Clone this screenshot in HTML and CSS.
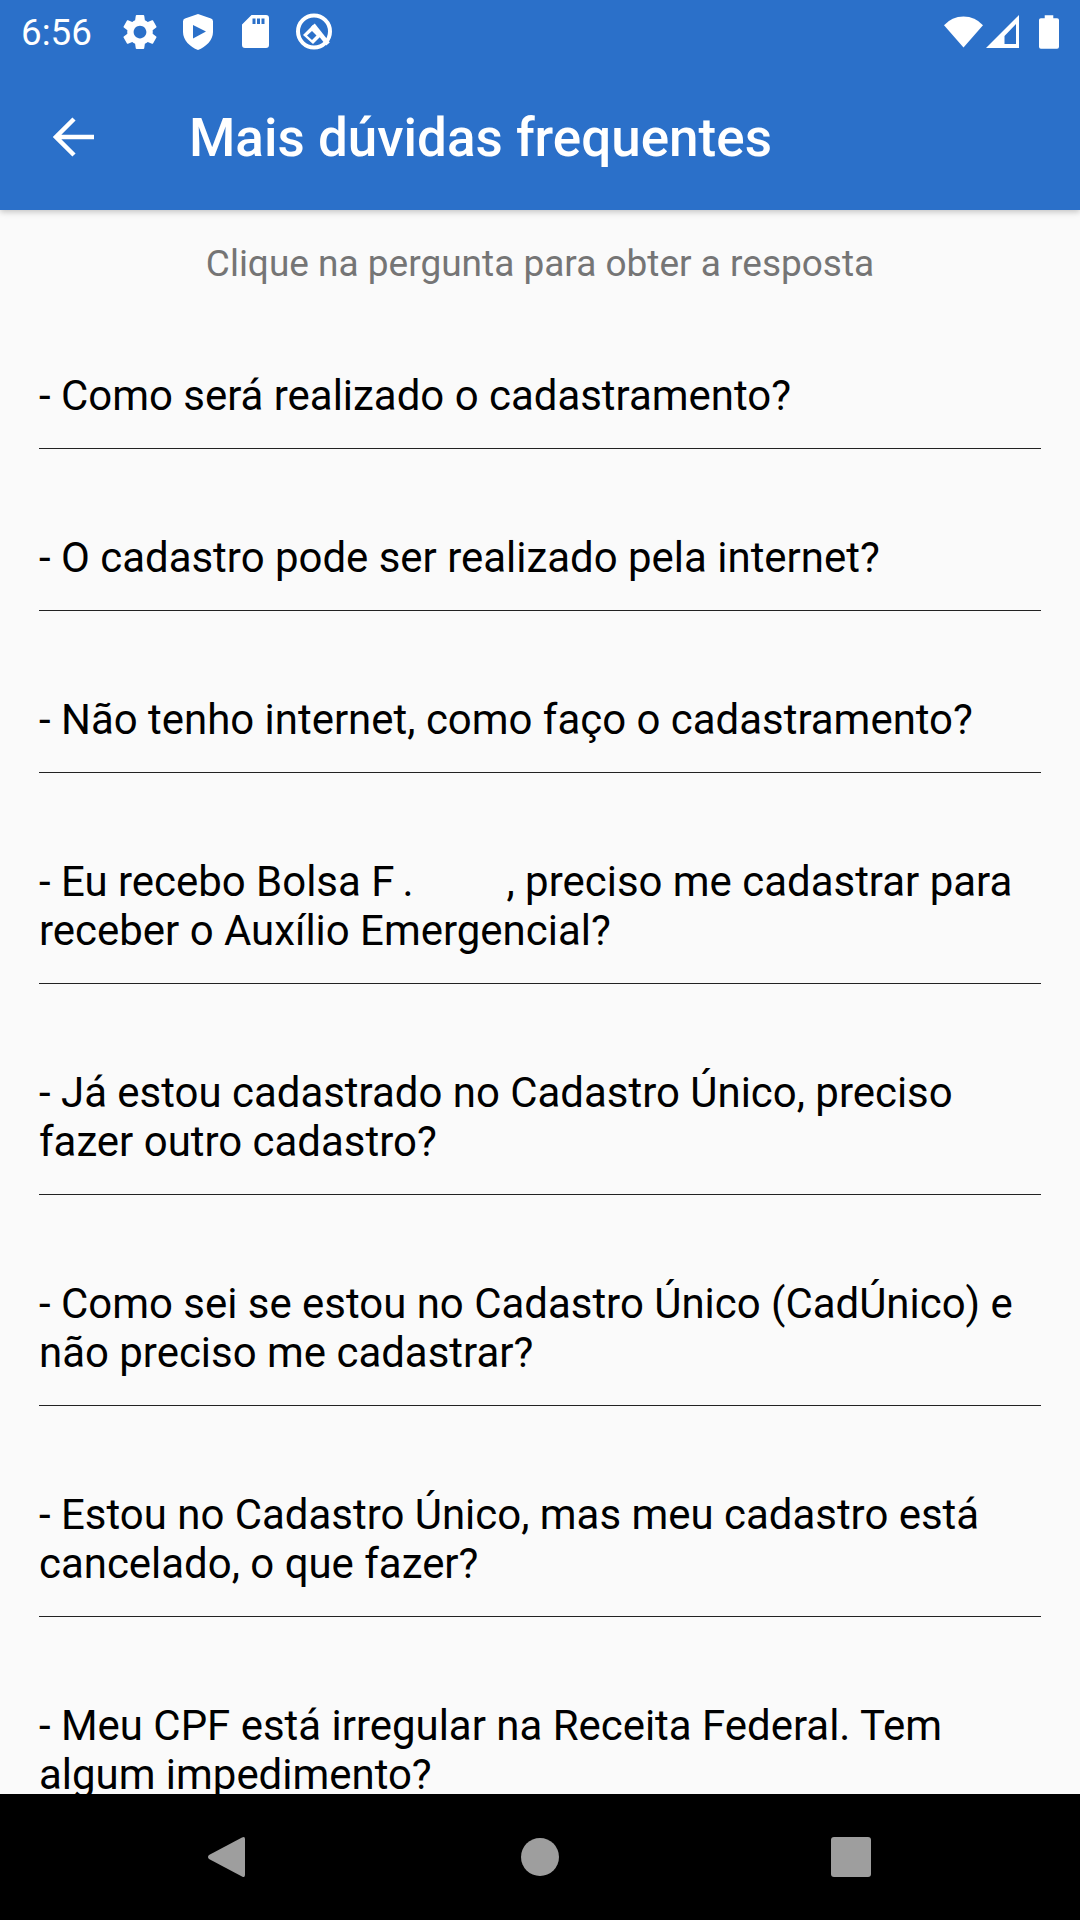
FILE: index.html
```html
<!DOCTYPE html>
<html>
  <head>
    <meta charset="UTF-8">
    <meta name="viewport" content="width=device-width, initial-scale=1.0">
    <title>Mais dúvidas frequentes</title>
    <link rel="stylesheet" href="styles.css">
  </head>
  <body>
    <div id="appContainer" class="flex-column">
      <header>
        <div id="statusBar" class="flex">
          <span class="status-time">6:56</span>
          <svg class="icon-gear" viewBox="2.4 2.4 19.2 19.2"><path d="M19.14,12.94c0.04-0.3,0.06-0.61,0.06-0.94c0-0.32-0.02-0.64-0.07-0.94l2.03-1.58c0.18-0.14,0.23-0.41,0.12-0.61 l-1.92-3.32c-0.12-0.22-0.37-0.29-0.59-0.22l-2.39,0.96c-0.5-0.38-1.03-0.7-1.62-0.94L14.4,2.81c-0.04-0.24-0.24-0.41-0.48-0.41 h-3.84c-0.24,0-0.43,0.17-0.47,0.41L9.25,5.35C8.66,5.59,8.12,5.92,7.63,6.29L5.24,5.33c-0.22-0.08-0.47,0-0.59,0.22L2.74,8.87 C2.62,9.08,2.66,9.34,2.86,9.48l2.03,1.58C4.84,11.36,4.8,11.69,4.8,12s0.02,0.64,0.07,0.94l-2.03,1.58 c-0.18,0.14-0.23,0.41-0.12,0.61l1.92,3.32c0.12,0.22,0.37,0.29,0.59,0.22l2.39-0.96c0.5,0.38,1.03,0.7,1.62,0.94l0.36,2.54 c0.05,0.24,0.24,0.41,0.48,0.41h3.84c0.24,0,0.44-0.17,0.47-0.41l0.36-2.54c0.59-0.24,1.13-0.56,1.62-0.94l2.39,0.96 c0.22,0.08,0.47,0,0.59-0.22l1.92-3.32c0.12-0.22,0.07-0.47-0.12-0.61L19.14,12.94z M12,15.6c-1.98,0-3.6-1.62-3.6-3.6 s1.62-3.6,3.6-3.6s3.6,1.62,3.6,3.6S13.98,15.6,12,15.6z"/></svg>
          <svg class="icon-shield" viewBox="0 0 30 36"><path fill-rule="evenodd" d="M15 0L28 4.5Q30 5.2 30 7.5V18C30 26 23 33 15 36C7 33 0 26 0 18V7.5Q0 5.2 2 4.5ZM10 11V24.5L23 17.5Z"/></svg>
          <svg class="icon-sd" viewBox="0 0 27 33"><path fill-rule="evenodd" d="M9.5 0H24Q27 0 27 3V30Q27 33 24 33H3Q0 33 0 30V9.5ZM10.5 3.5V9H13.5V3.5ZM15 3.5V9H18V3.5ZM19.5 3.5V9H22.5V3.5Z"/></svg>
          <svg class="icon-q" viewBox="0 0 38 38"><circle cx="19" cy="18.500" r="16" fill="none" stroke="#fff" stroke-width="4"/><path d="M18 12L33 31" fill="none" stroke="#fff" stroke-width="4.5"/><path d="M18 12L8 22L18 31L27 22Z" fill="#fff"/><path d="M17 18L12 22.500L17 27L21.500 22.500Z" fill="#2b70c9"/></svg>
          <div class="flex-grow-1"></div>
          <svg class="icon-wifi" viewBox="0 0 40 32"><path d="M20 32L0 9Q8 0 20 0T40 9Z"/></svg>
          <svg class="icon-signal" viewBox="0 0 33 33"><path fill-rule="evenodd" d="M33 0V33H0ZM30 9L18.500 21V29H30Z"/></svg>
          <svg class="icon-battery" viewBox="0 0 21 35"><path d="M6 0H15V3H19Q21 3 21 5V33Q21 35 19 35H2Q0 35 0 33V5Q0 3 2 3H6Z"/></svg>
        </div>
        <div id="appBar" class="flex">
          <svg class="icon-back" viewBox="0 0 42 40"><path d="M41 20H3M21 2L3 20L21 38" fill="none" stroke="#fff" stroke-width="4.5"/></svg>
          <h1>Mais dúvidas frequentes</h1>
        </div>
      </header>

      <div id="mainContent" class="flex-grow-1">
        <p class="hint text-center">Clique na pergunta para obter a resposta</p>
        <div class="question">- Como será realizado o cadastramento?</div>
        <div class="question">- O cadastro pode ser realizado pela internet?</div>
        <div class="question">- Não tenho internet, como faço o cadastramento?</div>
        <div class="question">- Eu recebo Bolsa F<span class="dot">.</span><span class="blank"></span>, preciso me cadastrar para receber o Auxílio Emergencial?</div>
        <div class="question">- Já estou cadastrado no Cadastro Único, preciso fazer outro cadastro?</div>
        <div class="question">- Como sei se estou no Cadastro Único (CadÚnico) e não preciso me cadastrar?</div>
        <div class="question">- Estou no Cadastro Único, mas meu cadastro está cancelado, o que fazer?</div>
        <div class="question">- Meu CPF está irregular na Receita Federal. Tem algum impedimento?</div>
      </div>

      <footer class="flex">
        <svg class="nav-back" viewBox="0 0 38 42"><path d="M35 1.5Q38 0 38 3V39Q38 42 35 40.5L2 23Q0 21 2 19Z"/></svg>
        <div class="nav-home"></div>
        <div class="nav-recent"></div>
      </footer>
    </div>
  </body>
</html>
```

FILE: styles.css
```css
/* Variables */
:root {
	--primary-blue: #2b70c9;
	--page-bg: #fafafa;
	--hint-text: #757575;
	--nav-gray: #9e9e9e;
}

/* Resets */
* {
	margin: 0;
	padding: 0;
	box-sizing: border-box;
}

body {
	font-family: Roboto, "Liberation Sans", sans-serif;
	color: #000;
}

/* Helper Classes */
.flex {
	display: flex;
}

.flex-column {
	display: flex;
	flex-direction: column;
}

.flex-grow-1 {
	flex-grow: 1;
}

.text-center {
	text-align: center;
}

#appContainer {
	height: 100vh;
	width: 100%;
	background-color: var(--page-bg);
	overflow: hidden;
}

/* Header */
header {
	position: relative;
	z-index: 1;
	height: 210px;
	flex-shrink: 0;
	background-color: var(--primary-blue);
	color: white;
	box-shadow: 0 2px 6px rgba(0, 0, 0, 0.22);
}

#statusBar {
	height: 63px;
	padding: 0 21px;
	align-items: center;
}

#statusBar svg {
	fill: white;
	flex-shrink: 0;
}

.status-time {
	width: 71px;
	padding-top: 2px;
	font-size: 36.75px;
	line-height: 63px;
}

.icon-gear {
	width: 34px;
	height: 34px;
	margin-left: 31px;
}

.icon-shield {
	width: 30px;
	height: 36px;
	margin-left: 26px;
}

.icon-sd {
	width: 27px;
	height: 33px;
	margin-left: 29px;
}

.icon-q {
	width: 38px;
	height: 38px;
	margin-left: 26px;
}

.icon-wifi {
	width: 39px;
	height: 32px;
}

.icon-signal {
	width: 33px;
	height: 33px;
	margin-left: 3px;
}

.icon-battery {
	width: 20px;
	height: 34px;
	margin-left: 20px;
}

#appBar {
	height: 147px;
	padding-left: 53px;
	align-items: center;
}

.icon-back {
	width: 42px;
	height: 40px;
}

h1 {
	margin-left: 94px;
	padding-top: 2px;
	font-size: 53px;
	font-weight: 500;
}

/* Questions */
#mainContent {
	overflow: hidden;
	min-height: 0;
}

.hint {
	height: 77px;
	padding-top: 31px;
	font-size: 37px;
	line-height: 46px;
	color: var(--hint-text);
}

.question {
	margin: 0 39px;
	padding: 84px 0 28px;
	font-size: 41.95px;
	line-height: 49px;
	border-bottom: 1px solid #222;
}

.dot {
	margin-left: 8px;
}

.blank {
	display: inline-block;
	width: 93px;
}

/* Navigation bar */
footer {
	height: 126px;
	flex-shrink: 0;
	background-color: #000;
	align-items: center;
}

.nav-back {
	width: 38px;
	height: 42px;
	margin-left: 207px;
	fill: var(--nav-gray);
}

.nav-home {
	width: 38px;
	height: 38px;
	margin-left: 276px;
	border-radius: 50%;
	background-color: var(--nav-gray);
}

.nav-recent {
	width: 40px;
	height: 40px;
	margin-left: 272px;
	border-radius: 3px;
	background-color: var(--nav-gray);
}
```
